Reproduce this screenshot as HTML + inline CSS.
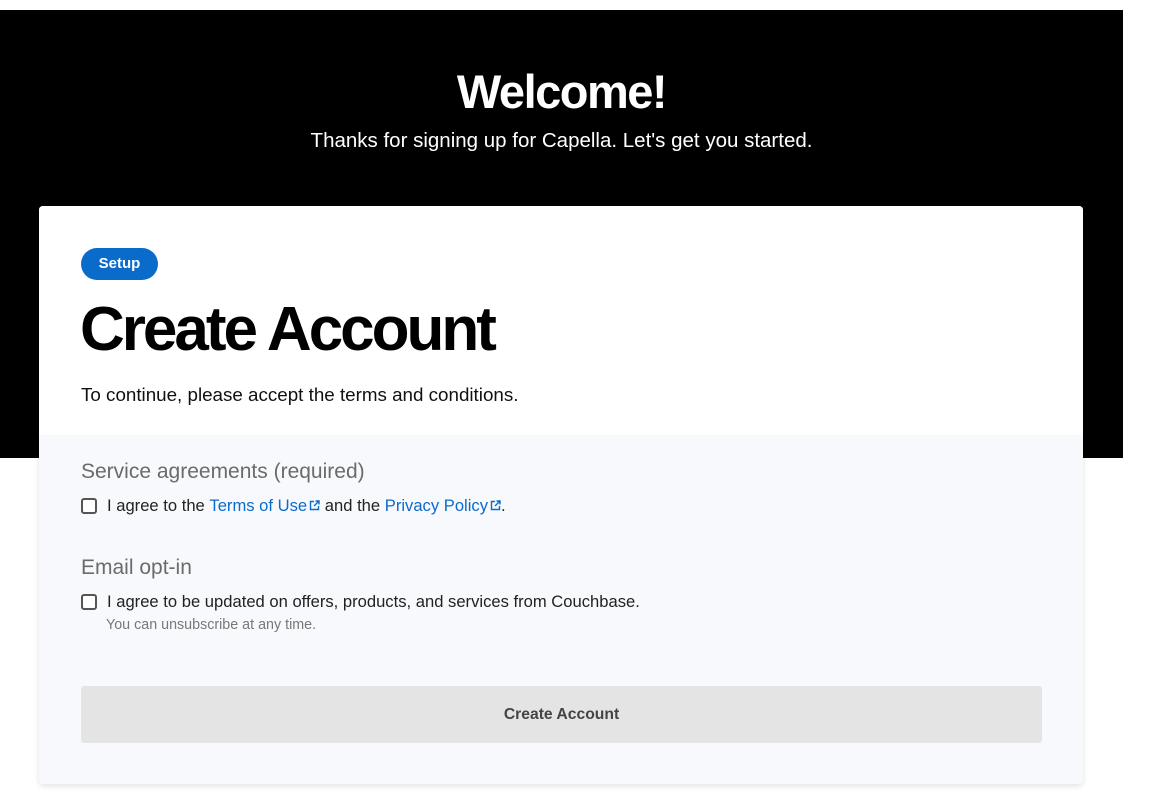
<!DOCTYPE html>
<html><head><meta charset="utf-8"><style>
*{margin:0;padding:0;box-sizing:border-box}
body{width:1161px;height:805px;background:#fff;position:relative;overflow:hidden;font-family:"Liberation Sans",Arial,sans-serif}
.hero{position:absolute;left:0;top:10px;width:1123px;height:448px;background:#000}
.h1{position:absolute;left:0;width:1123px;top:64px;text-align:center;color:#fff;font-weight:bold;font-size:47px;letter-spacing:-1.5px}
.sub{position:absolute;left:0;width:1123px;top:129px;text-align:center;color:#fff;font-size:20.5px}
.card{position:absolute;left:39px;top:206px;width:1044px;height:578px;background:#f7f9fc;border-radius:4px;box-shadow:0 2px 6px rgba(0,0,0,.12);overflow:hidden}
.top{position:absolute;left:0;top:0;width:100%;height:229px;background:#fff}
.pill{position:absolute;left:42px;top:42px;width:77px;height:32px;border-radius:16px;background:#0b6bcb;color:#fff;font-weight:bold;font-size:15px;text-align:center;line-height:31px}
.title{position:absolute;left:41px;top:88px;font-size:62px;font-weight:bold;letter-spacing:-3px;color:#000}
.intro{position:absolute;left:42px;top:178px;font-size:18.8px;color:#111}
.sec{position:absolute;left:42px;font-size:21px;color:#6b6b6b}
.row{position:absolute;left:42px;font-size:16.6px;color:#222;display:flex;align-items:center}
.cb{width:16px;height:16px;border:2px solid #555;border-radius:3px;margin-right:10px;background:#fff}
a{color:#0b6bcb;text-decoration:none}
svg{margin-left:2px;vertical-align:0}
.note{position:absolute;left:67px;top:411px;font-size:14.3px;color:#777}
.btn{position:absolute;left:42px;top:480px;width:961px;height:57px;background:#e4e4e4;border-radius:3px;text-align:center;line-height:57px;font-weight:bold;font-size:15.7px;color:#444}
</style></head><body>
<div class="hero"></div>
<div class="h1">Welcome!</div>
<div class="sub">Thanks for signing up for Capella. Let's get you started.</div>
<div class="card">
<div class="top"></div>
<div class="pill">Setup</div>
<div class="title">Create Account</div>
<div class="intro">To continue, please accept the terms and conditions.</div>
<div class="sec" style="top:254px">Service agreements (required)</div>
<div class="row" style="top:290px"><span class="cb"></span>I agree to the&nbsp;<a>Terms of Use<svg width="11" height="11" viewBox="0 0 11 11" fill="none" stroke="#0b6bcb" stroke-width="1.4"><path d="M5 1.5H1.5v8h8V6M6.5 1h3.5v3.5M10 1L5 6"/></svg></a>&nbsp;and the&nbsp;<a>Privacy Policy<svg width="11" height="11" viewBox="0 0 11 11" fill="none" stroke="#0b6bcb" stroke-width="1.4"><path d="M5 1.5H1.5v8h8V6M6.5 1h3.5v3.5M10 1L5 6"/></svg></a>.</div>
<div class="sec" style="top:350px">Email opt-in</div>
<div class="row" style="top:386px"><span class="cb"></span>I agree to be updated on offers, products, and services from Couchbase.</div>
<div class="note">You can unsubscribe at any time.</div>
<div class="btn">Create Account</div>
</div>
</body></html>
